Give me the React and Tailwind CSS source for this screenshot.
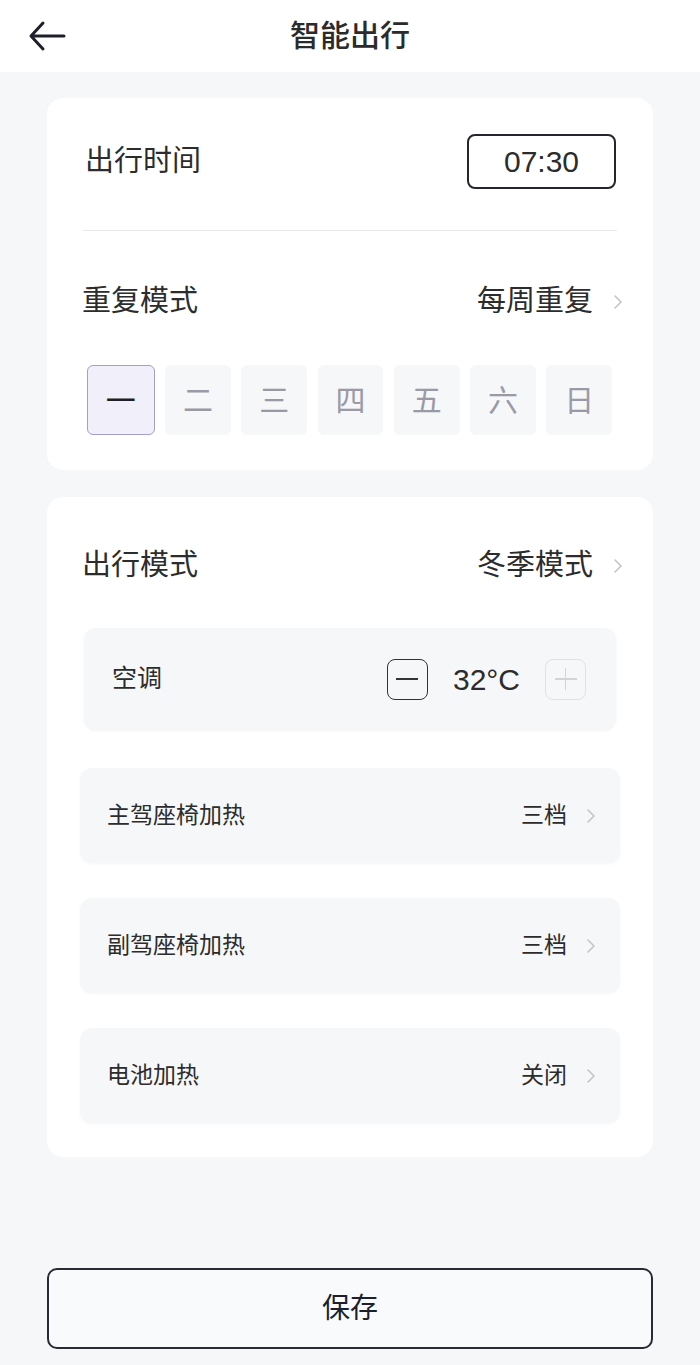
import React from 'react';

const FONT = { fontFamily: '"Liberation Sans", "Noto Sans CJK SC", sans-serif' };

const Chevron = ({ className = '' }) => (
  <svg className={className} width="10" height="16" viewBox="0 0 10 16" fill="none">
    <path d="M2 2l6 6-6 6" stroke="#c4c4cc" strokeWidth="1.6" strokeLinecap="round" strokeLinejoin="round" />
  </svg>
);

const days = ['一', '二', '三', '四', '五', '六', '日'];

const settings = [
  { label: '主驾座椅加热', value: '三档' },
  { label: '副驾座椅加热', value: '三档' },
  { label: '电池加热', value: '关闭' },
];

const App = () => {
  return (
    <div className="min-h-screen bg-[#f6f7f9] flex flex-col text-[#2c2c2c]" style={FONT}>
      {/* header */}
      <div className="h-[72px] bg-white flex items-center relative">
        <svg className="absolute left-[28px] top-[20px]" width="40" height="32" viewBox="0 0 40 32" fill="none">
          <path d="M15 3L3 16l12 13M3 16h33" stroke="#1f1f2b" strokeWidth="3" strokeLinecap="round" strokeLinejoin="round" />
        </svg>
        <h1 className="w-full text-center text-[30px] font-medium leading-none text-[#2b2b2b]">智能出行</h1>
      </div>

      {/* card 1 */}
      <div className="mx-[47px] mt-[26px] bg-white rounded-[16px] pt-[36px] pb-[35px]">
        <div className="flex items-center justify-between pl-[38px] pr-[37px]">
          <span className="text-[29px]">出行时间</span>
          <div className="w-[149px] h-[55px] border-2 border-[#25252f] rounded-[8px] flex items-center justify-center text-[30px]">
            07:30
          </div>
        </div>
        <div className="mx-[36px] mt-[41px] h-px bg-[#e8e8ec]" />
        <div className="flex items-center justify-between pl-[35px] pr-[30px] mt-[51px] h-[40px]">
          <span className="text-[29px]">重复模式</span>
          <div className="flex items-center gap-[20px]">
            <span className="text-[29px]">每周重复</span>
            <Chevron />
          </div>
        </div>
        <div className="flex gap-[10.5px] pl-[40px] pr-[41px] mt-[43px]">
          {days.map((d, i) => (
            <div
              key={d}
              className={
                i === 0
                  ? 'flex-1 h-[70px] rounded-[6px] border-[1.5px] border-[#a49ecf] bg-[#f1effa] flex items-center justify-center text-[30px] text-[#1f1f2b]'
                  : 'flex-1 h-[70px] rounded-[6px] bg-[#f6f7f9] flex items-center justify-center text-[30px] text-[#9a9aa6]'
              }
            >
              {d}
            </div>
          ))}
        </div>
      </div>

      {/* card 2 */}
      <div className="mx-[47px] mt-[27px] bg-white rounded-[16px] pt-[49px] pb-[34px]">
        <div className="flex items-center justify-between pl-[35px] pr-[30px] h-[40px]">
          <span className="text-[29px]">出行模式</span>
          <div className="flex items-center gap-[20px]">
            <span className="text-[29px]">冬季模式</span>
            <Chevron />
          </div>
        </div>

        <div className="mx-[37px] mt-[42px] h-[102px] rounded-[12px] bg-[#f6f7f9] shadow-[0_1px_3px_rgba(0,0,0,0.05)] flex items-center justify-between pl-[28px] pr-[30px]">
          <span className="text-[25px]">空调</span>
          <div className="flex items-center">
            <div className="w-[41px] h-[41px] border-[1.5px] border-[#333] rounded-[8px] flex items-center justify-center">
              <div className="w-[22px] h-[1.5px] bg-[#333]" />
            </div>
            <span className="text-[30px] mx-[25px]">32°C</span>
            <div className="w-[41px] h-[41px] border-[1.5px] border-[#e2e2e6] rounded-[8px] flex items-center justify-center relative">
              <div className="w-[22px] h-[1.5px] bg-[#d4d4d8]" />
              <div className="absolute w-[1.5px] h-[22px] bg-[#d4d4d8]" />
            </div>
          </div>
        </div>

        <div className="flex flex-col gap-[35px] mt-[38px]">
          {settings.map((s) => (
            <div
              key={s.label}
              className="mx-[33px] h-[95px] rounded-[12px] bg-[#f6f7f9] shadow-[0_1px_3px_rgba(0,0,0,0.04)] flex items-center justify-between pl-[27px] pr-[24px]"
            >
              <span className="text-[23px]">{s.label}</span>
              <div className="flex items-center gap-[19px]">
                <span className="text-[23px]">{s.value}</span>
                <Chevron />
              </div>
            </div>
          ))}
        </div>
      </div>

      {/* save */}
      <div className="mt-auto px-[47px] pb-[16px]">
        <button className="w-full h-[81px] border-2 border-[#2a2a35] rounded-[10px] bg-[#f9fafc] text-[28px] text-[#1f1f2b]">
          保存
        </button>
      </div>
    </div>
  );
};

export default App;
